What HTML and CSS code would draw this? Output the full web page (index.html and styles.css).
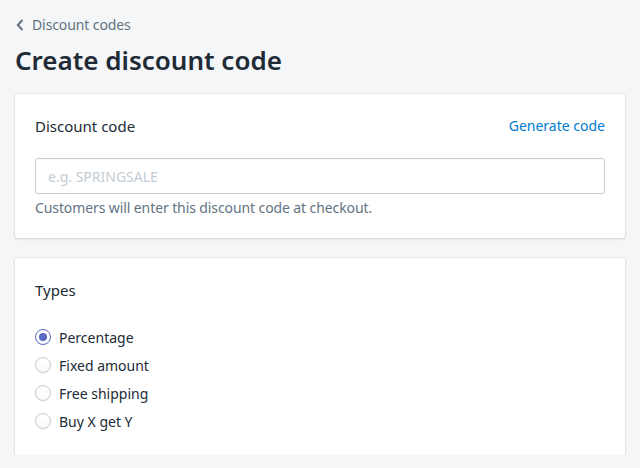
FILE: index.html
```html
<!DOCTYPE html>
<html lang="en">
<head>
<meta charset="utf-8">
<title>Create discount code</title>
<link rel="stylesheet" href="styles.css">
</head>
<body>
<div class="page">
  <header class="page-header">
    <a class="breadcrumb" href="#">
      <svg class="chev" width="8" height="12" viewBox="0 0 8 12" aria-hidden="true"><path d="M6.5 1 L1.8 6 L6.5 11" fill="none" stroke="#637381" stroke-width="2"/></svg>
      <span>Discount codes</span>
    </a>
    <h1 class="title">Create discount code</h1>
  </header>

  <section class="card">
    <div class="card-head">
      <h2 class="card-title">Discount code</h2>
      <a class="link" href="#">Generate code</a>
    </div>
    <input class="text-field" type="text" placeholder="e.g. SPRINGSALE">
    <p class="help">Customers will enter this discount code at checkout.</p>
  </section>

  <section class="card">
    <div class="card-head types-head">
      <h2 class="card-title">Types</h2>
    </div>
    <ul class="choices">
      <li class="choice"><span class="radio checked"></span><span>Percentage</span></li>
      <li class="choice"><span class="radio"></span><span>Fixed amount</span></li>
      <li class="choice"><span class="radio"></span><span>Free shipping</span></li>
      <li class="choice"><span class="radio"></span><span>Buy X get Y</span></li>
    </ul>
  </section>
</div>
</body>
</html>
```
FILE: styles.css
```css
* { box-sizing: border-box; }
html, body { margin: 0; padding: 0; }
body {
  background: #f4f6f8;
  font-family: "Noto Sans", "Open Sans", "DejaVu Sans", sans-serif;
  color: #212b36;
  font-size: 14px;
}
.page {
  padding: 15px 15px 0 15px;
  display: flex;
  flex-direction: column;
  gap: 20px;
}
.page-header { display: flex; flex-direction: column; }
.breadcrumb {
  display: flex;
  align-items: center;
  gap: 8px;
  color: #637381;
  text-decoration: none;
  font-size: 14px;
  line-height: 20px;
  padding-left: 1px;
  letter-spacing: -0.1px;
}
.chev { display: block; }
.title {
  margin: 11px 0 0 0;
  font-size: 26px;
  line-height: 28px;
  font-weight: 600;
  color: #212b36;
}
.card {
  background: #fff;
  border-radius: 3px;
  box-shadow: 0 0 0 1px rgba(63,63,68,.05), 0 1px 3px 0 rgba(63,63,68,.15);
  padding: 20px;
}
.card-head {
  display: flex;
  justify-content: space-between;
  align-items: center;
  margin-bottom: 20px;
}
.card-title {
  margin: 0;
  font-size: 15px;
  line-height: 24px;
  font-weight: 400;
  color: #212b36;
}
.link { color: #007ace; text-decoration: none; font-size: 14px; line-height: 24px; }
.text-field {
  display: block;
  width: 100%;
  height: 36px;
  border: 1px solid #c4cdd5;
  border-radius: 3px;
  padding: 0 12px;
  font-family: inherit;
  font-size: 14px;
  color: #212b36;
  box-shadow: inset 0 1px 0 0 rgba(99,115,129,.05);
}
.text-field::placeholder { color: #c4cdd5; }
.help { margin: 4px 0 0 0; color: #637381; font-size: 14px; line-height: 20px; letter-spacing: -0.1px; }
.choices { list-style: none; margin: 0; padding: 0; }
.types-head { margin-bottom: 21px; }
.choice {
  display: flex;
  align-items: center;
  gap: 8px;
  height: 28px;
  font-size: 14px;
  color: #212b36;
}
.radio {
  width: 16px;
  height: 16px;
  border-radius: 50%;
  border: 1px solid #c4cdd5;
  background: linear-gradient(180deg, #fff, #f9fafb);
  box-shadow: 0 1px 0 0 rgba(22,29,37,.05);
  display: flex;
  align-items: center;
  justify-content: center;
  flex: none;
}
.radio.checked { border-color: #5c6ac4; }
.radio.checked::after {
  content: "";
  width: 8px;
  height: 8px;
  border-radius: 50%;
  background: #5c6ac4;
}
```
